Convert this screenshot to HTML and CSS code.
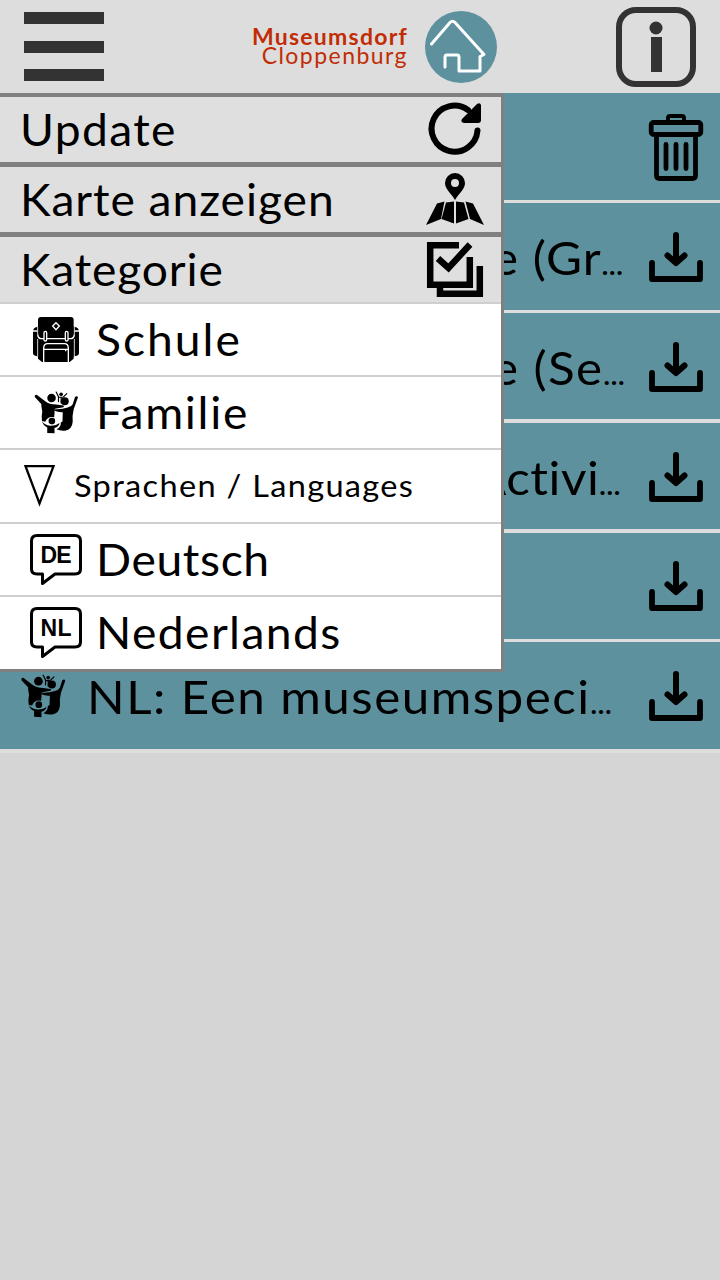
FILE: index.html
```html
<!DOCTYPE html>
<html lang="de">
<head>
<meta charset="utf-8">
<title>Museumsdorf Cloppenburg</title>
<link rel="stylesheet" href="styles.css">
</head>
<body>
<svg class="defs" width="0" height="0">
  <symbol id="download" viewBox="0 0 54 50">
    <path d="M3 31v16h48V31" fill="none" stroke="currentColor" stroke-width="5.800" stroke-linecap="round" stroke-linejoin="round"/>
    <path d="M27 3v25" fill="none" stroke="currentColor" stroke-width="6" stroke-linecap="round"/>
    <path d="M18.500 23.500l8.500 7.500 8.500-7.500" fill="none" stroke="currentColor" stroke-width="6" stroke-linecap="round" stroke-linejoin="round"/>
    <path d="M24 22h6v9h-6z"/>
  </symbol>
  <symbol id="family" viewBox="101 271 134 130">
    <circle cx="153" cy="292" r="13"/>
    <circle cx="193" cy="302" r="12"/>
    <circle cx="182" cy="281" r="5.500"/>
    <path d="M167 274l7 14v15M199 279l-10 10M174 290h12M182 290v17" fill="none" stroke="currentColor" stroke-width="3.500" stroke-linecap="round"/>
    <path d="M103 290q-3-8 5-8l26 20q12 10 33 10l22 3q4 6-4 6l-22 4-2 25q-20-4-27 14l-10-2q-2-15 1-29-3-15-3-23z"/>
    <path d="M224 289q6-5 9 1l-13 36q-5 20-3 38-2 24-23 27-17 1-26-4 14-7 13-21l5-3 1-28q-15 1-24-4v-5q22 1 39-5 11-2 15-10z"/>
    <circle cx="154" cy="362" r="10"/>
    <path d="M124 362q8 13 25 14 18 1 28-8-1 11-15 15v16l-22-1v-17q-12-5-16-19z"/>
  </symbol>
  <symbol id="bubble" viewBox="0 0 52 52">
    <path d="M7 1.500h38q5.500 0 5.500 5.500v28q0 5-5.500 5H25L12.500 49.500V40H7q-5.500 0-5.500-5V7Q1.500 1.500 7 1.500z" fill="none" stroke="currentColor" stroke-width="3" stroke-linejoin="round"/>
  </symbol>
</svg>

<header class="topbar">
  <div class="burger"><span></span><span></span><span></span></div>
  <div class="brand">
    <div class="brand-name"><b>Museumsdorf</b><span>Cloppenburg</span></div>
    <svg class="brand-mark" viewBox="0 0 72 72">
      <circle cx="36" cy="36" r="36" fill="#5d919e"/>
      <path d="M6.500 33L25 11.500q2.500-2.500 5 0L59 43.500l-4 2V60H34V46q0-2-2-2H22q-2 0-2 2v10" fill="none" stroke="#fff" stroke-width="3" stroke-linecap="round" stroke-linejoin="round"/>
    </svg>
  </div>
  <svg class="info" viewBox="0 0 80 80">
    <rect x="3" y="3" width="74" height="74" rx="17" fill="none" stroke="#333" stroke-width="6"/>
    <circle cx="40" cy="21" r="6.500" fill="#333"/>
    <path d="M35 30h11v35H35z" fill="#333"/>
  </svg>
</header>

<main class="list">
  <div class="row">
    <svg class="trash line" viewBox="0 0 54 67" stroke="currentColor" stroke-linecap="round" stroke-linejoin="round">
      <path d="M19 6V4q0-2 2-2h12q2 0 2 2v2" stroke-width="4"/>
      <rect x="2.200" y="8.500" width="49.600" height="12" rx="2.500" stroke-width="4.800"/>
      <path d="M7.500 22v39.500q0 3 3 3h33q3 0 3-3V22" stroke-width="4.800"/>
      <path d="M17 30.500v24M27 30.500v24M37 30.500v24" stroke-width="4.800"/>
    </svg>
  </div>
  <div class="row"><span class="title title-gr">e (Gr<i>…</i></span><svg class="dl"><use href="#download"/></svg></div>
  <div class="row tall"><span class="title title-se">e (Se<i>…</i></span><svg class="dl"><use href="#download"/></svg></div>
  <div class="row tall"><span class="title title-act">Activi<i>…</i></span><svg class="dl"><use href="#download"/></svg></div>
  <div class="row short"><svg class="dl"><use href="#download"/></svg></div>
  <div class="row last"><svg class="row-icon"><use href="#family"/></svg><span class="title title-nl">NL: Een museumspeci<i>…</i></span><svg class="dl"><use href="#download"/></svg></div>
</main>

<nav class="menu">
  <div class="item">
    <span class="label t-update">Update</span>
    <svg class="icon-refresh" viewBox="0 0 52 52">
      <path d="M39 7A23 23 0 1 0 48.500 27.500" fill="none" stroke="currentColor" stroke-width="6" stroke-linecap="round"/>
      <path d="M52 2v15q0 3-3 3H35q-4-1-2-4L48 1q3-2 4 1z"/>
    </svg>
  </div>
  <div class="item">
    <span class="label t-karte">Karte anzeigen</span>
    <svg class="icon-map" viewBox="0 0 58 52">
      <path fill-rule="evenodd" d="M29 0a10 10 0 0 1 10 10c0 6-6 10-10 17-4-7-10-11-10-17A10 10 0 0 1 29 0zm0 6a4 4 0 1 0 0 8 4 4 0 0 0 0-8z"/>
      <path d="M11 30.500l7.500-2L15 46 0 52zM20 29.500l8-1v22l-12.500-4.500zM30 28.500l8 1 4.500 16.500L30 50.500zM39.500 28.500l7.500 2L58 52l-14-6z"/>
    </svg>
  </div>
  <div class="item category">
    <span class="label t-kategorie">Kategorie</span>
    <svg class="icon-check line" viewBox="0 0 56 55" stroke="currentColor" stroke-width="6.500">
      <path d="M32 3.200H3.200v39.600h39.600V15"/>
      <path d="M13 46v5.800h39.800V24"/>
      <path d="M11 16.500L21.500 26 43 2.500"/>
    </svg>
  </div>
  <div class="sub">
    <svg class="icon-bag" viewBox="0 0 138 135">
      <path d="M15 29h4v89h-6Q0 116 0 108V44q0-13 15-15zM123 29q15 2 15 15v64q0 8-13 10h-6V29z"/>
      <path d="M24 0h89q9 0 9 9v116l-12 10H27l-12-10V9q0-9 9-9z"/>
      <g fill="none" stroke="#fff" stroke-width="4">
        <path d="M0 42h13M125 42h13M14 52q1 13 12 13h86q11 0 12-13M32 135V94q0-14 12-14h50q12 0 12 14v41M32 97h74"/>
        <rect x="33" y="43" width="8" height="29" rx="4" fill="#000"/>
        <rect x="97" y="43" width="8" height="29" rx="4" fill="#000"/>
        <path d="M69 17l10 10-10 11-10-11z"/>
        <path d="M98 97v6"/>
      </g>
      <path d="M14 30v22M124 30v22M14 66v52M124 66v52" fill="none" stroke="#fff" stroke-width="2.500"/>
    </svg>
    <span class="label t-schule">Schule</span>
  </div>
  <div class="sub"><svg class="icon-family"><use href="#family"/></svg><span class="label t-familie">Familie</span></div>
  <div class="sub languages">
    <svg class="icon-tri" viewBox="0 0 31 42"><path d="M1.500 1.200h28L15.500 38.500z" fill="none" stroke="currentColor" stroke-width="2.300"/></svg>
    <span class="label t-sprachen">Sprachen / Languages</span>
  </div>
  <div class="sub">
    <svg class="icon-lang" viewBox="0 0 52 52"><use href="#bubble"/><text x="26" y="29" text-anchor="middle" textLength="31">DE</text></svg>
    <span class="label t-deutsch">Deutsch</span>
  </div>
  <div class="sub tail">
    <svg class="icon-lang" viewBox="0 0 52 52"><use href="#bubble"/><text x="26" y="29" text-anchor="middle" textLength="31">NL</text></svg>
    <span class="label t-nederlands">Nederlands</span>
  </div>
</nav>
</body>
</html>
```
FILE: styles.css
```css
* { box-sizing: border-box; }
body {
  position: relative;
  margin: 0;
  width: 720px;
  height: 1280px;
  overflow: hidden;
  background: #d5d5d5;
  color: #000;
  font-family: Lato, "Open Sans", sans-serif;
}
svg { display: block; flex: none; fill: currentColor; overflow: visible; }
.line { fill: none; }
.defs { position: absolute; }

.topbar {
  display: flex;
  align-items: flex-start;
  justify-content: space-between;
  height: 93px;
  padding: 7px 24px 0;
  background: #ddd;
}
.burger { display: grid; row-gap: 16.500px; width: 80px; padding-top: 5px; }
.burger span { height: 12px; background: #333; }
.brand { display: flex; width: 245px; margin: 4px 0 0 29px; justify-content: space-between; }
.brand-name { display: flex; flex-direction: column; align-items: flex-end; width: 156px; padding-top: 16px; color: #c22c05; font-size: 23px; line-height: 19px; white-space: nowrap; }
.brand-name b { font-weight: 700; letter-spacing: 1.250px; }
.brand-name span { letter-spacing: 1.450px; }
.brand-mark { width: 72px; height: 72px; }
.info { width: 80px; height: 80px; }

.row {
  display: flex;
  align-items: center;
  height: 110px;
  padding: 0 17px 0 21px;
  border-bottom: 3px solid #ddd;
  background: #5d919e;
}
.tall { padding-top: 2px; border-bottom-width: 4px; }
.short { height: 109px; }
.last { height: 111px; border-bottom-width: 4px; }
.dl { width: 54px; height: 50px; margin-left: auto; }
.trash { width: 54px; height: 67px; margin: 2px 0 0 auto; }
.row-icon { width: 45px; height: 44px; }
.title, .label { transform: scaleX(1.05); transform-origin: left center; white-space: nowrap; }
.title { font-size: 47px; line-height: 56px; }
.title i { font-size: 26px; font-style: normal; font-weight: 700; line-height: 1; letter-spacing: 0; }
.title-gr { margin-left: 471px; letter-spacing: 1px; }
.title-se { margin-left: 471px; letter-spacing: 1.300px; }
.title-act { margin-left: 452px; letter-spacing: 0.500px; }
.title-nl { margin-left: 21px; letter-spacing: 1.400px; }

.menu {
  position: absolute;
  top: 93px;
  left: 0;
  width: 504px;
  height: 579px;
  border: solid #808080;
  border-width: 4px 3px 3px 0;
  background: #fff;
  font-size: 44px;
  line-height: 52px;
}
.item {
  display: flex;
  align-items: center;
  justify-content: space-between;
  height: 70px;
  padding: 0 17px 2px 20px;
  border-bottom: 5px solid #808080;
  background: #dfdfdf;
}
.category { height: 67px; border-bottom: 2px solid #cfcfcf; }
.sub { display: flex; align-items: center; height: 73px; padding-left: 30px; border-bottom: 2px solid #cfcfcf; }
.sub span { margin-bottom: 2px; }
.languages { height: 74px; padding-left: 24px; font-size: 31px; }
.tail { height: 72px; border-bottom: 0; }
.icon-refresh { width: 52px; height: 52px; margin-right: 3px; }
.icon-map { width: 58px; height: 52px; }
.icon-check { width: 56px; height: 55px; margin: 2px 1px 0 0; }
.icon-bag { width: 46px; height: 45px; margin-left: 3px; }
.icon-family { width: 45px; height: 43px; margin-left: 4px; }
.icon-tri { width: 31px; height: 42px; }
.icon-lang { width: 52px; height: 52px; }
.icon-lang text { font: bold 23px "Liberation Sans", Arial, sans-serif; }
.t-update { letter-spacing: 1.300px; }
.t-karte { letter-spacing: 0.900px; }
.t-kategorie { letter-spacing: 0.800px; }
.t-schule { margin-left: 17px; letter-spacing: 1.900px; }
.t-familie { margin-left: 17px; letter-spacing: 1.600px; }
.t-sprachen { margin-left: 19px; letter-spacing: 1.250px; }
.t-deutsch { margin-left: 14px; letter-spacing: 0.600px; }
.t-nederlands { margin-left: 14px; letter-spacing: 1.350px; }
```
